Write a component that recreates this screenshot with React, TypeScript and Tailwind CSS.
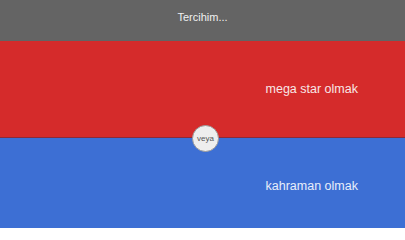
export default function App() {
  return (
    <div className="relative h-[228px] w-[405px] overflow-hidden font-['Liberation_Sans',Arial,sans-serif]">
      <header className="flex h-[41px] items-center justify-center bg-[#646464] pb-[7px] text-[11px] text-[#f0f0f0]">
        Tercihim...
      </header>
      <section className="grid h-[97px] grid-cols-2 border-b border-[#8a2a3a] bg-[#d52b2b]">
        <div />
        <div className="flex items-center justify-center pl-[16px] text-[12.5px] text-[#f8e6e6]">mega star olmak</div>
      </section>
      <section className="grid h-[97px] grid-cols-2 bg-[#3d6fd4]">
        <div />
        <div className="flex items-center justify-center pl-[16px] text-[12.5px] text-[#e8eefa]">kahraman olmak</div>
      </section>
      <div className="absolute left-[192px] top-[125px] flex h-[27px] w-[27px] items-center justify-center rounded-full border border-[#9a9a9a] bg-[#eeeeee] text-[8px] text-[#555]">
        veya
      </div>
    </div>
  );
}
